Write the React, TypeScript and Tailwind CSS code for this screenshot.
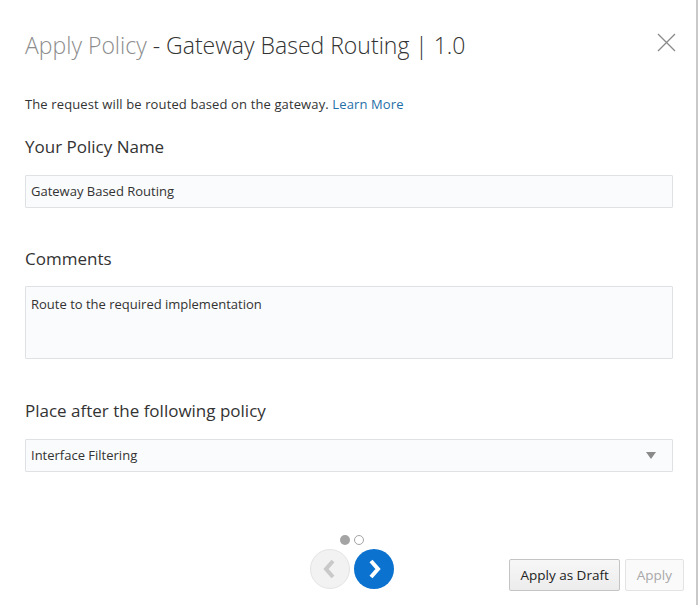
const FONT = "font-['Open_Sans',_'Liberation_Sans',_sans-serif]";

const Label = ({ children }: { children: string }) => {
  return <div className="text-[17px] text-[#333] leading-[24px]">{children}</div>;
};

const Field = ({ value, tall, select }: { value: string; tall?: boolean; select?: boolean }) => {
  return (
    <div
      className={
        "w-full border border-[#dfe2e5] bg-[#fafbfc] rounded-[1px] px-[5px] text-[13px] text-[#333] flex justify-between " +
        (tall ? "h-[73px] items-start pt-[8px]" : "h-[33px] items-center")
      }
    >
      <span>{value}</span>
      {select && (
        <svg width="10" height="7" viewBox="0 0 10 7" className="mr-[11px]">
          <path d="M0 0 L10 0 L5 7 Z" fill="#8a8a8a" />
        </svg>
      )}
    </div>
  );
};

const App = () => {
  return (
    <div className={"w-[698px] h-[605px] bg-white border-r-2 border-[#c9c9c9] flex flex-col " + FONT}>
      <div className="flex items-start justify-between pl-[25px] pr-[20px] pt-[29px]">
        <h1 className="text-[23px] font-light leading-[32px] text-[#333]">
          <span className="text-[#8c8c8c]">Apply Policy</span> - Gateway Based Routing | 1.0
        </h1>
        <button className="mt-[4px]">
          <svg width="19" height="19" viewBox="0 0 19 19">
            <path d="M1 1 L18 18 M18 1 L1 18" stroke="#8a8a8a" strokeWidth="1.3" />
          </svg>
        </button>
      </div>

      <div className="px-[25px] mt-[34px] w-[673px] box-content">
        <p className="text-[13px] tracking-[0.12px] text-[#333] leading-[18px]">
          The request will be routed based on the gateway. <a className="text-[#1f6fa8]">Learn More</a>
        </p>

        <div className="mt-[22px]">
          <Label>Your Policy Name</Label>
          <div className="mt-[16px] w-[648px]">
            <Field value="Gateway Based Routing" />
          </div>
        </div>

        <div className="mt-[39px]">
          <Label>Comments</Label>
          <div className="mt-[15px] w-[648px]">
            <Field value="Route to the required implementation" tall />
          </div>
        </div>

        <div className="mt-[40px]">
          <Label>Place after the following policy</Label>
          <div className="mt-[16px] w-[648px]">
            <Field value="Interface Filtering" select />
          </div>
        </div>
      </div>

      <div className="mt-auto relative h-[75px]">
        <div className="absolute left-[310px] top-[5px] flex flex-col items-center w-[84px]">
          <div className="flex gap-[4px]">
            <span className="w-[10px] h-[10px] rounded-full bg-[#a4a4a4]" />
            <span className="w-[10px] h-[10px] rounded-full border border-[#a4a4a4] bg-white" />
          </div>
          <div className="flex gap-[4px] mt-[4px]">
            <button className="w-[40px] h-[40px] rounded-full bg-[#f2f2f2] border border-[#e4e4e4] flex items-center justify-center">
              <svg width="16" height="20" viewBox="0 0 16 20">
                <path d="M11 2 L4 10 L11 18" stroke="#c9c9c9" strokeWidth="4" fill="none" />
              </svg>
            </button>
            <button className="w-[40px] h-[40px] rounded-full bg-[#0b72cf] flex items-center justify-center">
              <svg width="16" height="20" viewBox="0 0 16 20">
                <path d="M5 2 L12 10 L5 18" stroke="#ffffff" strokeWidth="4" fill="none" />
              </svg>
            </button>
          </div>
        </div>
        <div className="absolute right-[12px] top-[29px] flex gap-[5px]">
          <button className="h-[32px] px-[10px] text-[13.5px] text-[#222] border border-[#c4c4c4] rounded-[2px] bg-gradient-to-b from-[#f7f7f7] to-[#ececec]">
            Apply as Draft
          </button>
          <button className="h-[32px] px-[11px] text-[13.5px] text-[#a8a8a8] border border-[#e3e3e3] rounded-[2px] bg-[#fafafa]">
            Apply
          </button>
        </div>
      </div>
    </div>
  );
};

export default App;
